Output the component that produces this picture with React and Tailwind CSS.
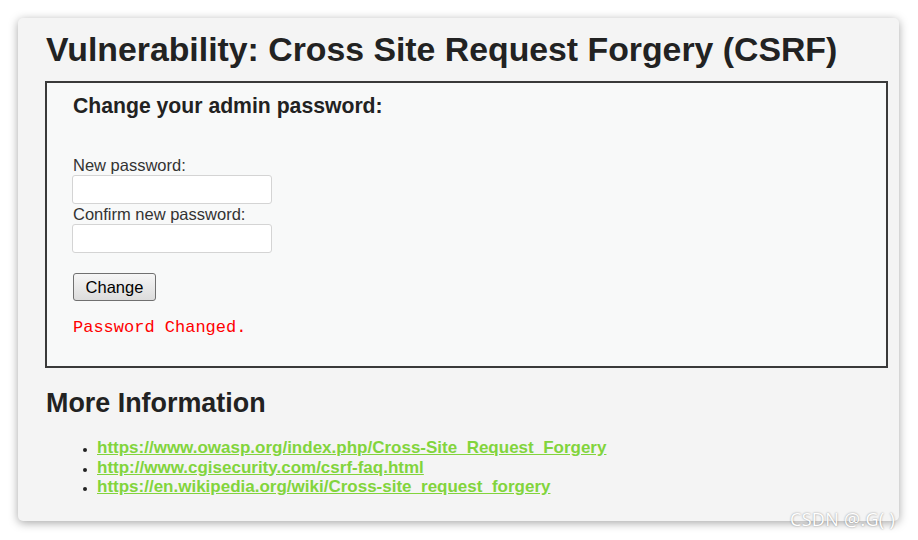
export default function App() {
  return (
    <div className="w-[918px] h-[540px] bg-white relative overflow-hidden" style={{ fontFamily: '"Liberation Sans", Arial, sans-serif' }}>
      <div className="absolute left-[18px] top-[18px] w-[881px] h-[503px] bg-[#f4f4f4] rounded-[5px] shadow-[0_2px_10px_rgba(0,0,0,0.35)] pl-[28px] pr-[11px] pt-[11px]">
        <h1 className="text-[33.8px] font-bold text-[#222] leading-[41px] m-0 whitespace-nowrap">Vulnerability: Cross Site Request Forgery (CSRF)</h1>
        <div className="mt-[11px] -ml-[1px] border-2 border-[#3a3a3a] bg-[#f8f9f9] h-[287px] pl-[26px] pt-[11px]">
          <h3 className="text-[21.2px] font-bold text-[#222] leading-[24px] whitespace-nowrap">Change your admin password:</h3>
          <div className="mt-[38px] text-[16.5px] text-[#333] leading-[18px]">New password:</div>
          <div className="w-[200px] h-[29px] bg-white border border-[#d4d4d4] rounded-[3px] mt-[1px] -ml-[1px]"></div>
          <div className="text-[16.5px] text-[#333] leading-[18px] mt-[1px]">Confirm new password:</div>
          <div className="w-[200px] h-[29px] bg-white border border-[#d4d4d4] rounded-[3px] mt-[1px] -ml-[1px]"></div>
          <button className="mt-[20px] w-[83px] h-[28px] rounded-[3px] border border-[#707070] bg-gradient-to-b from-[#f6f6f6] to-[#dcdcdc] text-[16.5px] text-black leading-none">Change</button>
          <div className="mt-[18px] text-[17px] text-[#ff0000] leading-[18px]" style={{ fontFamily: '"Liberation Mono", "Courier New", monospace' }}>Password Changed.</div>
        </div>
        <h2 className="mt-[19px] text-[26.9px] font-bold text-[#222] leading-[32px]">More Information</h2>
        <ul className="mt-[19px] pl-[51px] list-disc text-[17px] leading-[19.5px] marker:text-[#222] marker:text-[12px]">
          <li><a className="text-[#82d43c] underline font-bold">https://www.owasp.org/index.php/Cross-Site_Request_Forgery</a></li>
          <li><a className="text-[#82d43c] underline font-bold">http://www.cgisecurity.com/csrf-faq.html</a></li>
          <li><a className="text-[#82d43c] underline font-bold">https://en.wikipedia.org/wiki/Cross-site_request_forgery</a></li>
        </ul>
      </div>
      <div className="absolute left-[790px] top-[506px] text-[18px] text-white tracking-[0.3px]" style={{ fontFamily: '"Open Sans", sans-serif', textShadow: '0 0 2px rgba(0,0,0,0.45)' }}>CSDN @.G( )</div>
    </div>
  );
}
